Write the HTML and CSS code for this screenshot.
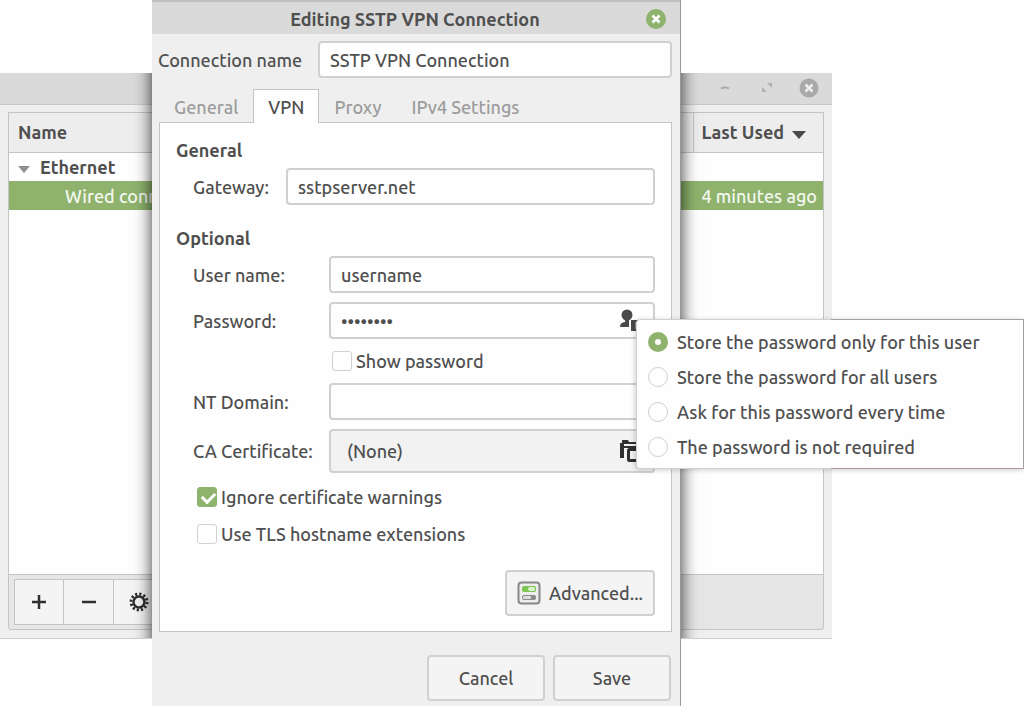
FILE: index.html
```html
<!DOCTYPE html>
<html lang="en">
<head>
    <meta charset="UTF-8" />
    <meta name="viewport" content="width=device-width, initial-scale=1.0" />
    <title>Editing SSTP VPN Connection</title>
    <link rel="stylesheet" href="styles.css">
</head>
<body>
    <div class="desktop">
        <div class="window">
            <div class="window-bar">
                <button class="bar-btn" aria-label="Minimize">
                    <svg width="20" height="20" viewBox="0 0 20 20"><path d="M6 10.500q4-2 8 0" fill="none" stroke="#aaa" stroke-width="2"/></svg>
                </button>
                <button class="bar-btn" aria-label="Maximize">
                    <svg width="20" height="20" viewBox="0 0 20 20"><path d="M10 5h5v5zM5 9v5h5z" fill="#b0b0b0"/></svg>
                </button>
                <button class="bar-btn" aria-label="Close">
                    <svg width="20" height="20" viewBox="0 0 20 20"><circle cx="10" cy="10" r="9.500" fill="#a9a9a9"/><path d="M6.500 6.500l7 7M13.500 6.500l-7 7" stroke="#eee" stroke-width="2.500"/></svg>
                </button>
            </div>
            <div class="window-body">
                <div class="list">
                    <table class="connections">
                        <thead>
                            <tr>
                                <th>Name</th>
                                <th class="used">Last Used <svg class="sort" width="14" height="8" viewBox="0 0 14 8"><path d="M0 0h14L7 8z" fill="#4a4a4a"/></svg></th>
                            </tr>
                        </thead>
                        <tbody>
                            <tr class="group">
                                <td><svg class="expander" width="12" height="7" viewBox="0 0 12 7"><path d="M0 0h12L6 7z" fill="#8f8f8f"/></svg>Ethernet</td>
                                <td></td>
                            </tr>
                            <tr class="selected">
                                <td class="child">Wired conn</td>
                                <td class="used">4 minutes ago</td>
                            </tr>
                        </tbody>
                    </table>
                </div>
                <div class="toolbar">
                    <button class="tool" aria-label="Add">
                        <svg width="20" height="20" viewBox="0 0 20 20"><path d="M10 3v14M3 10h14" stroke="#303030" stroke-width="2.500"/></svg>
                    </button>
                    <button class="tool" aria-label="Remove">
                        <svg width="20" height="20" viewBox="0 0 20 20"><path d="M3 10h14" stroke="#303030" stroke-width="2.500"/></svg>
                    </button>
                    <button class="tool" aria-label="Settings">
                        <svg width="20" height="20" viewBox="0 0 20 20"><circle cx="10" cy="10" r="5.500" fill="none" stroke="#303030" stroke-width="2.500"/><circle cx="10" cy="10" r="8" fill="none" stroke="#303030" stroke-width="3" stroke-dasharray="2.200 1.989"/></svg>
                    </button>
                </div>
            </div>
        </div>

        <div class="dialog" role="dialog" aria-labelledby="dialog-title">
            <div class="dialog-bar">
                <div class="dialog-title" id="dialog-title">Editing SSTP VPN Connection</div>
                <button class="bar-btn" aria-label="Close">
                    <svg width="20" height="20" viewBox="0 0 20 20"><circle cx="10" cy="10" r="10" fill="#8fb36d"/><path d="M6.500 6.500l7 7M13.500 6.500l-7 7" stroke="#fff" stroke-width="2.500"/></svg>
                </button>
            </div>

            <div class="name-row">
                <label for="conn-name">Connection name</label>
                <input class="text" type="text" id="conn-name" value="SSTP VPN Connection">
            </div>

            <div class="tabs" role="tablist">
                <button class="tab" role="tab">General</button>
                <button class="tab active" role="tab">VPN</button>
                <button class="tab" role="tab">Proxy</button>
                <button class="tab" role="tab">IPv4 Settings</button>
            </div>

            <div class="page">
                <h2>General</h2>
                <div class="fields gateway">
                    <label for="gateway">Gateway:</label>
                    <input class="text" type="text" id="gateway" value="sstpserver.net">
                </div>

                <h2>Optional</h2>
                <div class="fields">
                    <label for="username">User name:</label>
                    <input class="text" type="text" id="username" value="username">

                    <label for="password">Password:</label>
                    <div class="password-field">
                        <input class="text" type="password" id="password" value="password">
                        <button class="store-btn" aria-label="Password storage">
                            <svg width="24" height="24" viewBox="0 0 24 24"><circle cx="9" cy="6" r="5.500" fill="#4a4a4a"/><path d="M7 10h4v3H7zM2 18q0-5 6-5h3v5z" fill="#4a4a4a"/><path d="M13 11h9v11h-9z" fill="#4a4a4a"/><path d="M17 13h3v7h-3z" fill="#999"/></svg>
                        </button>
                        <div class="menu">
                            <label><input type="radio" name="store" checked>Store the password only for this user</label>
                            <label><input type="radio" name="store">Store the password for all users</label>
                            <label><input type="radio" name="store">Ask for this password every time</label>
                            <label><input type="radio" name="store">The password is not required</label>
                        </div>
                    </div>

                    <label class="check show"><input type="checkbox">Show password</label>

                    <label for="domain">NT Domain:</label>
                    <input class="text" type="text" id="domain">

                    <label for="cert">CA Certificate:</label>
                    <button class="file-btn" id="cert">
                        (None)
                        <svg width="24" height="24" viewBox="0 0 24 24"><path d="M4 1h6l1 2h11v3H6v13H2V4h2z" fill="#303030"/><path d="M6 5.500h16" stroke="#f2f2f2" stroke-width="1"/><rect x="7" y="7" width="16" height="16" fill="#f2f2f2"/><path d="M6 7h16v2H6z" fill="#303030"/><rect x="10.500" y="10.500" width="11" height="11" rx="1" fill="none" stroke="#303030" stroke-width="3"/></svg>
                    </button>
                </div>

                <div class="checks">
                    <label class="check"><input type="checkbox" checked>Ignore certificate warnings</label>
                    <label class="check"><input type="checkbox">Use TLS hostname extensions</label>
                </div>

                <div class="advanced-row">
                    <button class="btn">
                        <svg width="24" height="24" viewBox="0 0 24 24"><rect x="1.500" y="1.500" width="21" height="21" rx="3" fill="#ededed" stroke="#888" stroke-width="2"/><rect x="5" y="5" width="14" height="6" rx="2" fill="#7cc653"/><rect x="11" y="6" width="7" height="4" rx="2" fill="#dff3d2"/><rect x="5" y="14" width="14" height="5" rx="2" fill="#8a8a8a"/><rect x="6" y="15" width="8" height="3" rx="1" fill="#ddd"/></svg>
                        Advanced...
                    </button>
                </div>
            </div>

            <div class="actions">
                <button class="btn">Cancel</button>
                <button class="btn">Save</button>
            </div>
        </div>
    </div>
</body>
</html>
```
FILE: styles.css
```css
* {
    box-sizing: border-box;
}

body {
    margin: 0;
    background-color: #fefefe;
    color: #4f4f4f;
    font-family: Ubuntu, "Noto Sans", sans-serif;
    font-size: 18px;
    font-weight: 500;
    line-height: 24px;
}

button, input {
    font: inherit;
    color: inherit;
}

button {
    cursor: pointer;
}

svg {
    display: block;
    flex-shrink: 0;
}

.desktop {
    position: relative;
    min-height: 100vh;
    overflow: hidden;
}

/* Network connections window */
.window {
    position: absolute;
    left: 0;
    top: 73px;
    width: 832px;
    overflow: hidden;
    background-color: #efefef;
    border-bottom: 1px solid #ccc;
}

/* shadow of the editor, only falls on this window */
.window::after {
    content: "";
    position: absolute;
    left: 152px;
    top: -40px;
    bottom: -40px;
    width: 529px;
    box-shadow: 0 0 16px rgba(0,0,0,0.8);
}

.window-bar {
    display: flex;
    justify-content: flex-end;
    align-items: center;
    gap: 22px;
    height: 32px;
    padding: 0 13px 2px;
    background-color: #dadada;
    border-bottom: 1px solid #c8c8c8;
}

.bar-btn {
    padding: 0;
    border: none;
    background: none;
}

.window-body {
    padding: 7px 8px 8px;
}

.list {
    height: 463px;
    background-color: #fefefe;
    border: 1px solid #c4c4c4;
}

.connections {
    width: 100%;
    border-collapse: collapse;
    white-space: nowrap;
}

.connections th, .connections td {
    height: 29px;
    padding: 0 9px;
    text-align: left;
}

.connections th {
    height: 39px;
    background-color: #ededed;
    border-bottom: 1px solid #c4c4c4;
}

.connections .used {
    width: 130px;
    padding-left: 8px;
    border-left: 1px solid #c4c4c4;
}

.connections td.used {
    padding: 0 6px;
    border-left: none;
    text-align: right;
}

.sort, .expander {
    display: inline-block;
    vertical-align: middle;
}

.sort {
    margin-left: 4px;
}

.expander {
    margin-right: 10px;
}

.group {
    font-weight: bold;
}

.selected {
    background-color: #8fb36d;
    color: #f4f8f0;
}

.connections .child {
    padding-left: 56px;
}

.toolbar {
    display: flex;
    height: 55px;
    padding: 4px 5px;
    background-color: #e6e6e6;
    border: 1px solid #c4c4c4;
    border-top: none;
    border-radius: 0 0 4px 4px;
}

.tool {
    display: flex;
    justify-content: center;
    align-items: center;
    width: 50px;
    padding: 0;
    background-color: #f4f4f4;
    border: 1px solid #c4c4c4;
    border-left-width: 0;
}

.tool:first-child {
    border-left-width: 1px;
}

/* Connection editor */
.dialog {
    position: absolute;
    left: 152px;
    top: 0;
    width: 529px;
    min-height: 100vh;
    background-color: #efefef;
    border-right: 1px solid #999;
}

.dialog-bar {
    display: flex;
    align-items: center;
    height: 34px;
    padding: 2px 14px 0;
    background-color: #dadada;
    border-top: 2px solid #c0c0c0;
}

.dialog-title {
    flex: 1;
    padding-left: 18px;
    font-weight: bold;
    text-align: center;
}

.name-row {
    display: flex;
    align-items: center;
    gap: 16px;
    padding: 7px 8px 11px 6px;
    white-space: nowrap;
}

.text {
    flex: 1;
    width: 100%;
    min-width: 0;
    height: 37px;
    padding: 0 10px;
    background-color: #fefefe;
    border: 2px solid #d0d0d0;
    border-radius: 4px;
}

.tabs {
    display: flex;
    padding: 0 7px;
}

.tab {
    height: 33px;
    padding: 2px 14px 0;
    background: none;
    border: 1px solid transparent;
    border-bottom: none;
    color: #9c9c9c;
}

.tab.active {
    position: relative;
    margin-bottom: -1px;
    height: 34px;
    padding-bottom: 1px;
    background-color: #fefefe;
    border-color: #c4c4c4;
    color: #4f4f4f;
}

.page {
    margin: 0 8px 0 7px;
    padding: 15px 16px;
    background-color: #fefefe;
    border: 1px solid #c4c4c4;
}

h2 {
    margin: 0 0 6px;
    font-size: 18px;
    line-height: 24px;
}

.fields {
    display: grid;
    grid-template-columns: 127px 1fr;
    align-items: center;
    gap: 9px;
    padding-left: 17px;
    white-space: nowrap;
}

.fields.gateway {
    grid-template-columns: 84px 1fr;
    margin-bottom: 21px;
}

.password-field {
    position: relative;
}

.password-field .text {
    display: block;
}

.store-btn {
    position: absolute;
    right: 13px;
    top: 7px;
    padding: 0;
    border: none;
    background: none;
}

.menu {
    position: absolute;
    left: 307px;
    top: 17px;
    z-index: 1;
    width: 388px;
    padding: 4px 11px;
    background-color: #fefefe;
    border: 1px solid #d0d0d0;
    border-radius: 4px 0 0 4px;
    box-shadow: -1px 1px 5px rgba(0,0,0,0.2);
}

/* the part that hangs past the window is outlined darker */
.menu::after {
    content: "";
    position: absolute;
    left: 194px;
    right: -1px;
    top: -1px;
    bottom: -1px;
    border: 1px solid #a0a0a0;
    border-left: none;
    border-bottom-color: #b09a9a;
    pointer-events: none;
}

.menu label {
    display: flex;
    align-items: center;
    gap: 9px;
    height: 35px;
}

input[type="radio"], input[type="checkbox"] {
    appearance: none;
    flex-shrink: 0;
    width: 20px;
    height: 20px;
    margin: 0;
    background-color: #fefefe;
    border: 1px solid #d0d0d0;
    border-radius: 3px;
}

input[type="radio"] {
    border-radius: 50%;
}

input[type="radio"]:checked {
    border: 7px solid #8fb36d;
}

input[type="checkbox"]:checked {
    position: relative;
    background-color: #8fb36d;
    border-color: #8fb36d;
}

input[type="checkbox"]:checked::after {
    content: "";
    position: absolute;
    left: 4px;
    top: 4px;
    width: 10px;
    height: 6px;
    border: solid #fff;
    border-width: 0 0 3px 3px;
    transform: rotate(-45deg);
}

.check {
    display: flex;
    align-items: center;
    gap: 4px;
    height: 28px;
}

.check.show {
    grid-column: 2;
    height: 26px;
    padding-left: 3px;
}

.file-btn {
    display: flex;
    justify-content: space-between;
    align-items: center;
    height: 44px;
    padding: 0 11px 0 16px;
    background-color: #f2f2f2;
    border: 2px solid #d0d0d0;
    border-radius: 4px;
}

.checks {
    display: grid;
    gap: 9px;
    padding: 10px 0 0 21px;
}

.advanced-row {
    display: flex;
    justify-content: flex-end;
    margin-top: 22px;
}

.btn {
    display: flex;
    justify-content: center;
    align-items: center;
    gap: 8px;
    min-width: 118px;
    height: 46px;
    padding: 0 10px;
    background-color: #f4f4f4;
    border: 2px solid #d0d0d0;
    border-radius: 4px;
}

.actions {
    display: flex;
    justify-content: flex-end;
    gap: 8px;
    padding: 23px 9px 6px;
}
```
